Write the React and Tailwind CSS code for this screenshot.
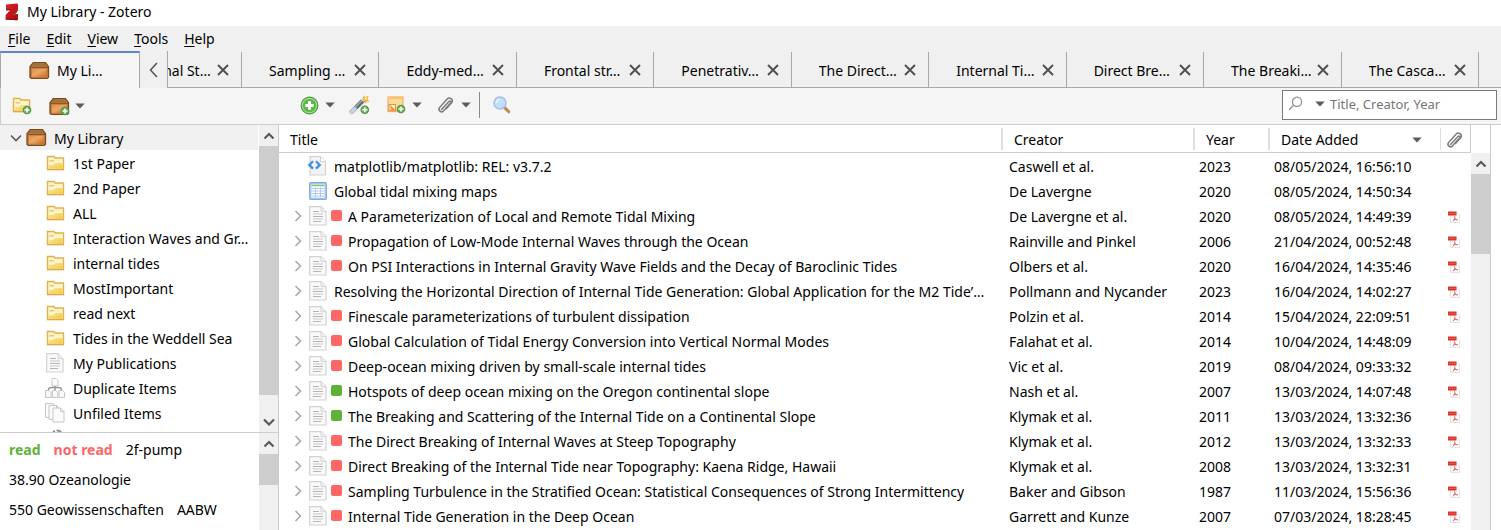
import React from "react";

const FONT = "font-['Noto_Sans','Open_Sans',sans-serif]";

function ZoteroLogo() {
  return (
    <svg width="14" height="18" viewBox="0 0 14 18" className="shrink-0" aria-hidden="true">
      <defs>
        <linearGradient id="zl" x1="0" y1="0" x2="1" y2="1">
          <stop offset="0" stopColor="#e02a2a" />
          <stop offset="0.5" stopColor="#c4161a" />
          <stop offset="1" stopColor="#a80d12" />
        </linearGradient>
      </defs>
      <path d="M1 1.500 L12 .5 L13 1.500 V6 L8.500 11.200 L13 11 V16 L12 17.200 L.6 16.600 V12 L5.400 6.800 L1 7.200Z" fill="url(#zl)" />
      <path d="M1 6.400 L6 6 L5 7.300 L1.400 7.600Z M8.500 11.200 L13 6 V7.600 L10.300 11.100Z" fill="#7b0a0e" />
      <path d="M.6 15.600 L13 16 L12 17.200 L.6 16.600Z" fill="#8f0c10" />
    </svg>
  );
}

function PlusBadge({ x, y }) {
  return (
    <g transform={`translate(${x} ${y})`}>
      <circle cx="4.5" cy="4.5" r="4.3" fill="#4f9440" />
      <circle cx="4.5" cy="4.5" r="3.3" fill="#69ad55" />
      <path d="M4.5 2v5M2 4.5h5" stroke="#fff" strokeWidth="1.5" />
    </g>
  );
}

function BoxIcon({ plus }) {
  return (
    <svg width="21" height="19" viewBox="0 0 21 19" className="shrink-0" aria-hidden="true">
      <defs>
        <linearGradient id="bx" x1="0" y1="0" x2="1" y2="1">
          <stop offset="0" stopColor="#d9904a" />
          <stop offset="0.45" stopColor="#eba763" />
          <stop offset="1" stopColor="#c8642a" />
        </linearGradient>
      </defs>
      <path d="M4.2 1.6h12.2l3.1 4.2v10.4l-1.2 1.2H2.2L1 16.200V5.800Z" fill="#b98048" stroke="#7d4a1d" strokeWidth="1.300" />
      <path d="M4.800 2.700h11l2 3H2.700Z" fill="#a1703c" />
      <path d="M1.600 6.500h17.300" stroke="#8a5424" strokeWidth="1" />
      <rect x="2.500" y="7.300" width="15.500" height="8.900" fill="url(#bx)" stroke="#c67a3a" strokeWidth=".8" />
      {plus && <PlusBadge x={11.500} y={9.500} />}
    </svg>
  );
}

function FolderShape() {
  return (
    <g>
      <path d="M1.500 1.500h6.500l1 1.500h8.500v11.500h-16Z" fill="#fdf3c9" stroke="#e0b24e" strokeWidth="1.400" />
      <path d="M2.500 13.500V9.500h5l1.500-2h7.500v6Z" fill="url(#fd)" />
      <path d="M3.500 5h4.500v1.500h-4.500Z" fill="#ecc86f" />
      <path d="M3 9h4.500l1.500-1.800h7.500" fill="none" stroke="#fffbe6" strokeWidth="1" />
      <path d="M1 14.500h17" stroke="#e2a54c" strokeWidth="1.200" />
    </g>
  );
}

function FolderDefs() {
  return (
    <defs>
      <linearGradient id="fd" x1="0" y1="0" x2="1" y2="1">
        <stop offset="0" stopColor="#fae9a0" />
        <stop offset="1" stopColor="#f0cb3d" />
      </linearGradient>
    </defs>
  );
}

function FolderIcon() {
  return (
    <svg width="19" height="16" viewBox="0 0 19 16" className="shrink-0" aria-hidden="true">
      <FolderDefs />
      <FolderShape />
    </svg>
  );
}

function NewCollectionIcon() {
  return (
    <svg width="20" height="18" viewBox="0 0 20 18" aria-hidden="true">
      <FolderDefs />
      <FolderShape />
      <PlusBadge x={10.500} y={8.500} />
    </svg>
  );
}

function PageIcon() {
  return (
    <svg width="18" height="20" viewBox="0 0 18 20" className="shrink-0" aria-hidden="true">
      <path d="M.7.700h11.300l5 5v13.300H.7Z" fill="#fafafa" stroke="#d2d2d2" strokeWidth="1.200" />
      <path d="M12 .7v5h5" fill="#f0f0f0" stroke="#d2d2d2" strokeWidth="1" />
      <path d="M4 5.500h6M4 10.500h10M4 15.500h8" stroke="#b4b4b4" strokeWidth="1" />
      <path d="M4 8h10M4 13h10" stroke="#c6c6c6" strokeWidth="1" />
    </svg>
  );
}

function DuplicateIcon() {
  return (
    <svg width="20" height="20" viewBox="0 0 20 20" className="shrink-0" aria-hidden="true">
      <path d="M7 .5h4l2 2v5.500h-6Z" fill="#fafafa" stroke="#cacaca" />
      <path d="M3.500 12c0-2.800 2.500-2.500 6.500-2.500s6.500-.3 6.500 2.500M10 8v4" fill="none" stroke="#9a9a9a" strokeWidth="1.500" />
      {[0, 6.800, 13.500].map((x) => (
        <path key={x} transform={`translate(${x} 0)`} d="M.5 12.500h3.500l2 2v5h-5.500Z" fill="#fafafa" stroke="#c3c3c3" />
      ))}
    </svg>
  );
}

function UnfiledIcon() {
  return (
    <svg width="20" height="20" viewBox="0 0 20 20" className="shrink-0" aria-hidden="true">
      {[[0.500, 0.500], [4, 2.500], [8, 5]].map(([x, y]) => (
        <g key={x} transform={`translate(${x} ${y})`}>
          <path d="M0 0h7.500l3.500 3.500v10.500H0Z" fill="#fbfbfb" stroke="#c6c6c6" />
          <path d="M7.500 0v3.500H11" fill="none" stroke="#c6c6c6" />
        </g>
      ))}
    </svg>
  );
}

function TrashIcon() {
  return (
    <svg width="20" height="20" viewBox="0 0 20 20" className="shrink-0" aria-hidden="true">
      <path d="M4 6.500c1-3 2.500-4 5-4s4.500 1 5.300 3.500" fill="none" stroke="#8d8d8d" strokeWidth="1.800" strokeDasharray="5 1.500" />
      <path d="M3 9h13l-1.500 10h-10Z" fill="#eee" stroke="#aaa" />
    </svg>
  );
}

function CodeIcon() {
  return (
    <svg width="20" height="20" viewBox="0 0 20 20" className="shrink-0" aria-hidden="true">
      <path d="M3 .7h10.500l5 5v13.300H3Z" fill="#f2f3f5" stroke="#d2d2d2" strokeWidth="1.200" />
      <path d="M13.500 .7v5h5" fill="#fff" stroke="#d2d2d2" />
      <path d="M6 5.200 2.300 8.900 6 12.600M9 5.200l3.700 3.700L9 12.600" fill="none" stroke="#3f8fe6" strokeWidth="2.300" />
    </svg>
  );
}

function TableIcon() {
  return (
    <svg width="18" height="18" viewBox="0 0 18 18" className="shrink-0" aria-hidden="true">
      <rect x=".7" y=".7" width="16.600" height="16.600" rx="1" fill="#b9d2f5" stroke="#7ba7e3" strokeWidth="1.200" />
      <rect x="2.500" y="2.500" width="13" height="13" fill="#fff" />
      <path d="M2.500 3.500h13" stroke="#87c47b" strokeWidth="1.600" />
      <path d="M2.500 6.500h13M2.500 9h13M2.500 11.500h13M2.500 14h13M6.500 5.500v10M11.500 5.500v10" stroke="#abc8f0" strokeWidth="1" />
    </svg>
  );
}

function PdfIcon() {
  return (
    <svg width="12" height="12" viewBox="0 0 12 12" className="ml-2 block" aria-hidden="true">
      <path d="M2.500 1.500h6.500l2.500 2.500v7.500h-9Z" fill="#fdfdfd" stroke="#dcdcdc" strokeWidth=".8" />
      <rect x="0" y=".5" width="8.500" height="4" fill="#dc3227" />
      <path d="M1.200 2.400h1.600M3.700 2.400h1.500M6.100 2.400h1.400" stroke="#ec8278" strokeWidth=".8" />
      <path d="M6.500 5.200c.8 2.300.3 3.600-1.700 5M6.800 7.300c.8 1.300 1.500 1.500 2.900 1.600M5.500 9c1.200-.6 2.500-.6 4-.3" fill="none" stroke="#df4a40" strokeWidth=".8" />
    </svg>
  );
}

function ClipIcon() {
  return (
    <svg width="18" height="18" viewBox="0 0 18 18" className="shrink-0" aria-hidden="true">
      <path
        d="M4.500 13.500 12 5.500c1-1.200 2.600.1 1.600 1.400L6.400 15c-2 2.200-5.900-.6-3.900-3.400L10 3.200c2.400-2.700 6.800.2 4.800 3.400L9.500 12.500"
        fill="none"
        stroke="#7b7b7b"
        strokeWidth="1.500"
        strokeLinecap="round"
      />
    </svg>
  );
}

function AddItemIcon() {
  return (
    <svg width="19" height="19" viewBox="0 0 19 19" aria-hidden="true">
      <circle cx="9.500" cy="9.500" r="8.900" fill="#479a3c" />
      <circle cx="9.500" cy="9.500" r="7.800" fill="#a9dc95" />
      <circle cx="9.500" cy="9.500" r="6.600" fill="#5fb64b" />
      <path d="M9.500 5.300v8.400M5.300 9.500h8.400" stroke="#fff" strokeWidth="3" />
    </svg>
  );
}

function WandIcon() {
  return (
    <svg width="21" height="20" viewBox="0 0 21 20" aria-hidden="true">
      <path d="M2.800 16.800 15 4.500" stroke="#5e6876" strokeWidth="4.400" strokeLinecap="round" />
      <path d="M2.800 16.800 5.800 13.700" stroke="#c5d3e2" strokeWidth="4" strokeLinecap="round" />
      <path d="M5.500 13 13.500 5" stroke="#a4b0be" strokeWidth="1.300" />
      <path d="M13 5.500 15 3.500" stroke="#e3e9f0" strokeWidth="3.600" />
      <path d="m14.500 0 1.500 2 3.500-1.200-.8 3.400 1.600 2.300-2.800.2-1 2.300-1.200-3-2.800-1.500 2-1Z" fill="#f7b43b" />
      <path d="m15.500 2.500 2.500-.3-.5 2.500-1.500.3Z" fill="#fff0b5" />
      <PlusBadge x={11.300} y={10.300} />
    </svg>
  );
}

function NoteIcon() {
  return (
    <svg width="19" height="18" viewBox="0 0 19 18" aria-hidden="true">
      <rect x="1" y="1" width="15" height="14.500" fill="#fbdc97" stroke="#f3b563" strokeWidth="1.300" />
      <path d="M2 2.500h13" stroke="#f8c67c" strokeWidth="1.500" />
      <rect x="2" y="8.500" width="6.500" height="6.200" fill="#fff6df" stroke="#e88d3b" strokeWidth="1" />
      <path d="m3 9.500 4.500 4.200M4 13.500v-3l3 3Z" stroke="#e88d3b" strokeWidth="1" fill="#f4b06a" />
      <PlusBadge x={9.500} y={8.500} />
    </svg>
  );
}

function MagnifierIcon() {
  return (
    <svg width="18" height="18" viewBox="0 0 18 18" aria-hidden="true">
      <path d="m11.500 11.500 4.300 4.300" stroke="#c8854a" strokeWidth="3" strokeLinecap="round" />
      <path d="m10.500 10.500 1.500 1.500" stroke="#8a8a8a" strokeWidth="1.800" />
      <circle cx="7" cy="7" r="6" fill="#c3ddfb" stroke="#a6bfe6" strokeWidth="1.500" />
      <path d="M3.500 7c0-2 1.500-3.500 3.500-3.500" fill="none" stroke="#e8f3ff" strokeWidth="1.500" />
    </svg>
  );
}

function SearchGlyph() {
  return (
    <svg width="15" height="15" viewBox="0 0 15 15" className="shrink-0" aria-hidden="true">
      <circle cx="9" cy="5.800" r="4.600" fill="none" stroke="#8f8f8f" strokeWidth="1.300" />
      <path d="M5.600 9.200 1 13.800" stroke="#8f8f8f" strokeWidth="1.300" />
    </svg>
  );
}

function Caret() {
  return (
    <svg width="10" height="6" viewBox="0 0 10 6" className="shrink-0" aria-hidden="true">
      <path d="M.3.500h9.400L5 5.600Z" fill="#5c5c5c" />
    </svg>
  );
}

function Chevron({ dir, size = 12, color = "#5a5a5a", width = 1.800 }) {
  const paths = {
    up: "M1.500 8.500 6 4l4.500 4.500",
    down: "M1 3.500 6 8.500l5-5",
    left: "M8.500 0 3 6l5.500 6",
    right: "M3.500 1l5 5-5 5",
  };
  return (
    <svg width={size} height={size} viewBox="0 0 12 12" className="shrink-0 overflow-visible" aria-hidden="true">
      <path d={paths[dir]} fill="none" stroke={color} strokeWidth={width} />
    </svg>
  );
}

function CloseIcon() {
  return (
    <svg width="12" height="12" viewBox="0 0 12 12" aria-hidden="true">
      <path d="m1 1 10 10M11 1 1 11" stroke="#4f4f4f" strokeWidth="1.900" />
    </svg>
  );
}

function Tab({ title, className }) {
  return (
    <div className={`flex items-center border-r border-[#a8a8a8] pl-[27px] pr-3 ${className}`}>
      <button type="button" className="min-w-0 flex-1 overflow-hidden pt-0.5 text-left whitespace-nowrap">{title}</button>
      <button type="button" aria-label={`Close ${title}`} className="shrink-0">
        <CloseIcon />
      </button>
    </div>
  );
}

const tabs = [
  "Sampling …",
  "Eddy-med…",
  "Frontal str…",
  "Penetrativ…",
  "The Direct…",
  "Internal Ti…",
  "Direct Bre…",
  "The Breaki…",
  "The Casca…",
];

const collections = [
  ["1st Paper", FolderIcon],
  ["2nd Paper", FolderIcon],
  ["ALL", FolderIcon],
  ["Interaction Waves and Gr…", FolderIcon],
  ["internal tides", FolderIcon],
  ["MostImportant", FolderIcon],
  ["read next", FolderIcon],
  ["Tides in the Weddell Sea", FolderIcon],
  ["My Publications", PageIcon],
  ["Duplicate Items", DuplicateIcon],
  ["Unfiled Items", UnfiledIcon],
];

const items = [
  ["matplotlib/matplotlib: REL: v3.7.2", "code", "", "Caswell et al.", "2023", "08/05/2024, 16:56:10"],
  ["Global tidal mixing maps", "table", "", "De Lavergne", "2020", "08/05/2024, 14:50:34"],
  ["A Parameterization of Local and Remote Tidal Mixing", "page", "red", "De Lavergne et al.", "2020", "08/05/2024, 14:49:39"],
  ["Propagation of Low-Mode Internal Waves through the Ocean", "page", "red", "Rainville and Pinkel", "2006", "21/04/2024, 00:52:48"],
  ["On PSI Interactions in Internal Gravity Wave Fields and the Decay of Baroclinic Tides", "page", "red", "Olbers et al.", "2020", "16/04/2024, 14:35:46"],
  ["Resolving the Horizontal Direction of Internal Tide Generation: Global Application for the M2 Tide’…", "page", "", "Pollmann and Nycander", "2023", "16/04/2024, 14:02:27"],
  ["Finescale parameterizations of turbulent dissipation", "page", "red", "Polzin et al.", "2014", "15/04/2024, 22:09:51"],
  ["Global Calculation of Tidal Energy Conversion into Vertical Normal Modes", "page", "red", "Falahat et al.", "2014", "10/04/2024, 14:48:09"],
  ["Deep-ocean mixing driven by small-scale internal tides", "page", "red", "Vic et al.", "2019", "08/04/2024, 09:33:32"],
  ["Hotspots of deep ocean mixing on the Oregon continental slope", "page", "green", "Nash et al.", "2007", "13/03/2024, 14:07:48"],
  ["The Breaking and Scattering of the Internal Tide on a Continental Slope", "page", "green", "Klymak et al.", "2011", "13/03/2024, 13:32:36"],
  ["The Direct Breaking of Internal Waves at Steep Topography", "page", "red", "Klymak et al.", "2012", "13/03/2024, 13:32:33"],
  ["Direct Breaking of the Internal Tide near Topography: Kaena Ridge, Hawaii", "page", "red", "Klymak et al.", "2008", "13/03/2024, 13:32:31"],
  ["Sampling Turbulence in the Stratified Ocean: Statistical Consequences of Strong Intermittency", "page", "red", "Baker and Gibson", "1987", "11/03/2024, 15:56:36"],
  ["Internal Tide Generation in the Deep Ocean", "page", "red", "Garrett and Kunze", "2007", "07/03/2024, 18:28:45"],
];

const tagColors = { red: "bg-[#ff6666]", green: "bg-[#5fb236]" };

function ItemRow({ item }) {
  const [title, kind, tag, creator, year, date] = item;
  return (
    <tr className="h-[25px]">
      <td className="p-0">
        <div className="flex items-center">
          <div className="flex w-[30px] shrink-0 justify-center pl-2">
            {kind === "page" && (
              <button type="button" aria-label={`Expand ${title}`}>
                <Chevron dir="right" color="#a6a6a6" width={1.500} />
              </button>
            )}
          </div>
          <div className={`flex w-[18px] shrink-0 ${kind === "code" ? "justify-end" : "justify-start"}`}>
            {kind === "code" && <CodeIcon />}
            {kind === "table" && <TableIcon />}
            {kind === "page" && <PageIcon />}
          </div>
          {tag && <span className={`ml-1 h-[11px] w-[11px] shrink-0 rounded-[2px] ${tagColors[tag]}`} />}
          <span className={`truncate pt-0.5 leading-5 ${tag ? "ml-1.5" : "ml-[7px]"}`}>{title}</span>
        </div>
      </td>
      <td className="truncate p-0 pt-0.5 pl-2 leading-5">{creator}</td>
      <td className="p-0 pt-0.5 pl-1.5 leading-5">{year}</td>
      <td className="p-0 pt-0.5 pl-1.5 leading-5 whitespace-nowrap">{date}</td>
      <td className="p-0 pt-0.5">{kind === "page" && <PdfIcon />}</td>
    </tr>
  );
}

function HeaderCell({ children }) {
  return (
    <th scope="col" className="border-b border-[#cccccc] p-0 text-left font-normal">
      <div className="flex h-[22px] items-center border-l-2 border-[#dedede] pt-0.5 pl-[11px]">{children}</div>
    </th>
  );
}

function ScrollBar({ label, thumb, down }) {
  return (
    <div className="flex w-[19px] shrink-0 flex-col bg-[#f0f0f0]">
      <button type="button" aria-label={`Scroll ${label} up`} className="flex h-[21px] shrink-0 items-center justify-center">
        <Chevron dir="up" width={2.200} />
      </button>
      <div className={`bg-[#cdcdcd] ${thumb}`} />
      {down && (
        <button type="button" aria-label={`Scroll ${label} down`} className="mt-auto flex h-[21px] shrink-0 items-center justify-center">
          <Chevron dir="down" width={2.200} />
        </button>
      )}
    </div>
  );
}

export default function App() {
  return (
    <div className={`flex h-screen flex-col overflow-hidden bg-white text-sm leading-5 text-black ${FONT}`}>
      <header className="flex h-[26px] shrink-0 items-center gap-2 pb-[3px] pl-[5px]">
        <ZoteroLogo />
        <h1 className="pt-px">My Library - Zotero</h1>
      </header>

      <nav className="flex h-[25px] shrink-0 items-center gap-4 bg-[#f0f0f0] pl-2">
        {["File", "Edit", "View", "Tools", "Help"].map((m) => (
          <button key={m} type="button">
            <span className="underline underline-offset-2">{m[0]}</span>
            {m.slice(1)}
          </button>
        ))}
      </nav>

      <div className="flex h-[37px] shrink-0 bg-[#f0f0f0]">
        <button type="button" className="flex w-[140px] shrink-0 items-center gap-[7px] border-x border-t-2 border-x-[#a8a8a8] border-t-[#5f84cb] bg-[#f5f5f5] pl-7">
          <BoxIcon />
          <span>My Li…</span>
        </button>
        <button type="button" aria-label="Scroll tabs left" className="flex w-[28px] shrink-0 items-center justify-center border-r border-[#a8a8a8]">
          <Chevron dir="left" size={14} width={1.400} />
        </button>
        <div className="flex min-w-0 flex-1 border-b border-[#a8a8a8] pt-px">
          <div className="flex w-[74px] shrink-0 justify-end overflow-hidden">
            <Tab title="Internal St…" className="w-[138px] shrink-0" />
          </div>
          <div className="flex min-w-0 flex-1 pr-[22px]">
            {tabs.map((t) => (
              <Tab key={t} title={t} className="min-w-0 flex-1 basis-0" />
            ))}
          </div>
        </div>
      </div>

      <div className="flex h-[37px] shrink-0 items-center border-b border-l border-[#cccccc] bg-[#f5f5f5]">
        <div className="flex w-[278px] shrink-0 items-center pl-[11px]">
          <button type="button" aria-label="New Collection">
            <NewCollectionIcon />
          </button>
          <button type="button" aria-label="New Library" className="ml-[17px] flex items-center gap-[5px]">
            <BoxIcon plus />
            <Caret />
          </button>
        </div>
        <div className="flex flex-1 items-center pb-0.5 pl-[21px]">
          <button type="button" aria-label="New Item" className="flex items-center gap-1.5">
            <AddItemIcon />
            <Caret />
          </button>
          <button type="button" aria-label="Add Item by Identifier" className="ml-[14px]">
            <WandIcon />
          </button>
          <button type="button" aria-label="New Note" className="ml-[17px] flex items-center gap-1.5">
            <NoteIcon />
            <Caret />
          </button>
          <button type="button" aria-label="Add Attachment" className="ml-[15px] flex items-center gap-1.5">
            <ClipIcon />
            <Caret />
          </button>
          <div className="ml-2 h-[26px] w-px bg-[#8a8a8a]" />
          <button type="button" aria-label="Advanced Search" className="ml-[13px]">
            <MagnifierIcon />
          </button>
        </div>
        <label className="mr-1 mb-[3px] flex h-[30px] w-[215px] shrink-0 items-center border border-[#7a7a7a] bg-white pb-0.5 pl-[5px]">
          <SearchGlyph />
          <span className="ml-3 mr-[5px]">
            <Caret />
          </span>
          <input
            type="text"
            aria-label="Search"
            placeholder="Title, Creator, Year"
            className="w-full min-w-0 bg-transparent text-[13px] outline-none placeholder:text-[#757575]"
          />
        </label>
      </div>

      <div className="flex min-h-0 flex-1">
        <aside className="flex w-[279px] shrink-0 flex-col border-r border-[#cccccc]">
          <div className="flex min-h-0 flex-1 border-b border-[#cccccc]">
            <ul className="min-w-0 flex-1 overflow-hidden">
              <li className="mr-px flex h-[25px] items-center bg-[#f0f0f0] pl-[10px]">
                <Chevron dir="down" width={1.600} />
                <span className="ml-1 mr-[7px] flex">
                  <BoxIcon />
                </span>
                <span className="pt-0.5">My Library</span>
              </li>
              {collections.map(([name, Icon]) => (
                <li key={name} className="flex h-[25px] items-center pl-[45px]">
                  <span className="flex w-5 shrink-0 justify-center">
                    <Icon />
                  </span>
                  <span className="ml-2 pt-0.5 whitespace-nowrap">{name}</span>
                </li>
              ))}
              <li aria-label="Trash" className="flex h-[25px] items-center pl-12">
                <TrashIcon />
              </li>
            </ul>
            <ScrollBar label="collections" thumb="h-[249px]" down />
          </div>
          <div className="flex h-[97px] shrink-0">
            <div className="flex min-w-0 flex-1 flex-wrap content-start gap-x-[13px] overflow-hidden pl-[9px] pt-0.5 leading-[30px]">
              <button type="button" className="font-bold text-[#5fb236]">read</button>
              <button type="button" className="font-bold text-[#ff6666]">not read</button>
              <button type="button">2f-pump</button>
              <button type="button" className="mr-20">38.90 Ozeanologie</button>
              <button type="button">550 Geowissenschaften</button>
              <button type="button">AABW</button>
            </div>
            <ScrollBar label="tags" thumb="h-[31px]" />
          </div>
        </aside>

        <main className="flex min-w-0 flex-1">
          <div className="min-w-0 flex-1 overflow-hidden">
            <table className="w-full table-fixed border-separate border-spacing-0">
              <colgroup>
                <col />
                <col className="w-[192px]" />
                <col className="w-[75px]" />
                <col className="w-[172px]" />
                <col className="w-[31px]" />
              </colgroup>
              <thead>
                <tr className="h-7">
                  <th scope="col" className="border-b border-[#cccccc] p-0 pt-0.5 pl-[11px] text-left font-normal">Title</th>
                  <HeaderCell>Creator</HeaderCell>
                  <HeaderCell>Year</HeaderCell>
                  <HeaderCell>
                    <span className="flex-1">Date Added</span>
                    <span className="mr-[18px]">
                      <Caret />
                    </span>
                  </HeaderCell>
                  <th scope="col" aria-label="Attachments" className="border-b border-r border-[#cccccc] p-0">
                    <div className="flex h-[22px] items-center border-l border-[#dedede] pt-0.5 pl-[5px]">
                      <ClipIcon />
                    </div>
                  </th>
                </tr>
              </thead>
              <tbody>
                {items.map((item) => (
                  <ItemRow key={item[0]} item={item} />
                ))}
              </tbody>
            </table>
          </div>
          <div className="mr-[10px] flex shrink-0 border-r border-[#cccccc] pt-7">
            <ScrollBar label="items" thumb="h-[80px]" />
          </div>
        </main>
      </div>
    </div>
  );
}
